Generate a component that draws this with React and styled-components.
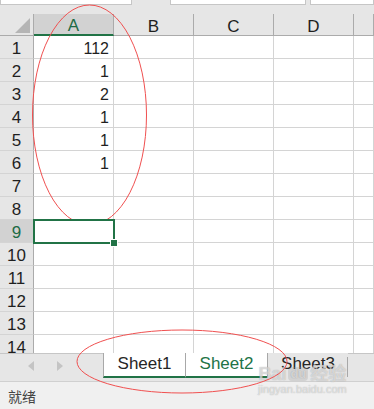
import React from "react";
import styled, { createGlobalStyle } from "styled-components";

const GlobalStyle = createGlobalStyle`
  html, body {
    margin: 0;
    padding: 0;
    background: #e6e6e6;
  }
  * {
    box-sizing: border-box;
  }
`;

const columns = ["A", "B", "C", "D", ""];
const values = ["112", "1", "2", "1", "1", "1"];
const rowCount = 14;
const selectedRow = 9;

const App = () => {
  return (
    <Window>
      <GlobalStyle />
      <TopStrip>
        <FormulaBox $width={132} />
        <FormulaGap $width={38} />
        <FormulaBox $width={136} />
        <FormulaGap $width={4} />
        <FormulaBox $width={64} />
      </TopStrip>

      <Sheet>
        <Corner>
          <CornerTriangle />
        </Corner>
        {columns.map((c, i) => (
          <ColHeader key={c + i} $selected={i === 0}>
            {c}
          </ColHeader>
        ))}

        {Array.from({ length: rowCount }).map((_, r) => {
          const row = r + 1;
          return (
            <React.Fragment key={row}>
              <RowHeader $selected={row === selectedRow}>{row}</RowHeader>
              {columns.map((c, i) => (
                <Cell key={c + i} $selected={row === selectedRow && i === 0}>
                  {i === 0 && values[r]}
                  {row === selectedRow && i === 0 && <FillHandle />}
                </Cell>
              ))}
            </React.Fragment>
          );
        })}
      </Sheet>

      <TabBar>
        <NavArrows>
          <Arrow viewBox="0 0 6 10">
            <path d="M6 0 L0 5 L6 10 Z" />
          </Arrow>
          <Arrow viewBox="0 0 6 10">
            <path d="M0 0 L6 5 L0 10 Z" />
          </Arrow>
        </NavArrows>
        <Tabs>
          <Tab $active>Sheet1</Tab>
          <Tab $active $current>
            Sheet2
          </Tab>
          <Tab>Sheet3</Tab>
        </Tabs>
        <Watermark>
          <WmLogo>
            Bai<WmBadge>du</WmBadge>经验
          </WmLogo>
          <WmUrl>jingyan.baidu.com</WmUrl>
        </Watermark>
      </TabBar>

      <StatusBar>就绪</StatusBar>

      <Annotation viewBox="0 0 374 409">
        <ellipse cx="89.5" cy="115" rx="57" ry="110" />
        <ellipse cx="182" cy="361.5" rx="105" ry="31.5" />
      </Annotation>
    </Window>
  );
};

export default App;

const Window = styled.div`
  position: relative;
  width: 374px;
  height: 409px;
  overflow: hidden;
  background: #e6e6e6;
  display: flex;
  flex-direction: column;
  font-family: "Liberation Sans", Arial, sans-serif;
  color: #1f1f1f;
`;

const TopStrip = styled.div`
  height: 14px;
  flex: none;
  display: flex;
  align-items: flex-start;
`;

const FormulaBox = styled.div`
  width: ${(p) => p.$width}px;
  height: 5px;
  background: #ffffff;
  border: 1px solid #c6c6c6;
  border-top: none;
  flex: none;
`;

const FormulaGap = styled.div`
  width: ${(p) => p.$width}px;
  flex: none;
`;

const Sheet = styled.div`
  flex: none;
  height: 339px;
  overflow: hidden;
  display: grid;
  grid-template-columns: 34px 80px 80px 80px 80px 1fr;
  grid-template-rows: 22px;
  grid-auto-rows: 23px;
  background: #ffffff;
`;

const Corner = styled.div`
  position: relative;
  background: #e6e6e6;
  border-right: 1px solid #ababab;
  border-bottom: 1px solid #ababab;
`;

const CornerTriangle = styled.div`
  position: absolute;
  right: 3px;
  bottom: 2px;
  width: 0;
  height: 0;
  border-left: 15px solid transparent;
  border-bottom: 15px solid #b5b5b5;
`;

const ColHeader = styled.div`
  display: flex;
  align-items: center;
  justify-content: center;
  font-size: 17px;
  padding-top: 4px;
  background: ${(p) => (p.$selected ? "#d2d2d2" : "#e6e6e6")};
  color: ${(p) => (p.$selected ? "#1e6b45" : "#1f1f1f")};
  border-right: 1px solid #ababab;
  border-bottom: ${(p) => (p.$selected ? "2px solid #217346" : "1px solid #ababab")};
`;

const RowHeader = styled.div`
  display: flex;
  align-items: center;
  justify-content: center;
  font-size: 17px;
  padding-top: 3px;
  background: ${(p) => (p.$selected ? "#d2d2d2" : "#e6e6e6")};
  color: ${(p) => (p.$selected ? "#1e6b45" : "#1f1f1f")};
  border-right: 1px solid #ababab;
  border-bottom: 1px solid #d4d4d4;
`;

const Cell = styled.div`
  position: relative;
  display: flex;
  align-items: center;
  justify-content: flex-end;
  padding: 3px 4px 0 0;
  font-size: 16px;
  background: #ffffff;
  border-right: 1px solid #d4d4d4;
  border-bottom: 1px solid #d4d4d4;
  ${(p) =>
    p.$selected &&
    `
    outline: 2px solid #217346;
    outline-offset: -1px;
    z-index: 1;
  `}
`;

const FillHandle = styled.span`
  position: absolute;
  right: -4px;
  bottom: -4px;
  width: 6px;
  height: 6px;
  background: #217346;
  border: 1px solid #ffffff;
  box-sizing: content-box;
  margin: -1px;
`;

const TabBar = styled.div`
  position: relative;
  flex: none;
  height: 29px;
  display: flex;
  align-items: flex-start;
  background: #e6e6e6;
  border-top: 1px solid #c6c6c6;
  border-bottom: 1px solid #d0d0d0;
`;

const NavArrows = styled.div`
  width: 103px;
  height: 24px;
  display: flex;
  align-items: center;
  gap: 23px;
  padding-left: 28px;
  flex: none;
`;

const Arrow = styled.svg`
  width: 6px;
  height: 10px;
  fill: #c4c4c4;
`;

const Tabs = styled.div`
  display: flex;
  align-items: flex-start;
  height: 24px;
  margin-top: -1px;
`;

const Tab = styled.div`
  width: ${(p) => (p.$active ? "82px" : "81px")};
  height: 25px;
  display: flex;
  align-items: center;
  justify-content: center;
  font-size: 17px;
  padding-bottom: 1px;
  color: ${(p) => (p.$current ? "#217346" : "#262626")};
  background: ${(p) => (p.$active ? "#ffffff" : "#e6e6e6")};
  border-left: 1px solid #a8a8a8;
  border-bottom: ${(p) => (p.$active ? "2px solid #217346" : "none")};
  &:last-child {
    position: relative;
    padding-bottom: 3px;
  }
  &:last-child::after {
    content: "";
    position: absolute;
    right: 0;
    top: 4px;
    bottom: 1px;
    width: 1px;
    background: #a8a8a8;
  }
`;

const Watermark = styled.div`
  position: absolute;
  left: 258px;
  top: 11px;
  display: flex;
  flex-direction: column;
  align-items: center;
  pointer-events: none;
  color: rgba(255, 255, 255, 0.55);
  text-shadow: 0 0 1px rgba(110, 110, 110, 0.6);
  font-family: "Liberation Sans", "Noto Sans CJK SC", sans-serif;
`;

const WmLogo = styled.div`
  display: flex;
  align-items: center;
  gap: 2px;
  font-size: 18px;
  font-weight: bold;
  line-height: 18px;
`;

const WmBadge = styled.span`
  font-size: 13px;
  line-height: 14px;
  padding: 0 2px;
  border-radius: 4px;
  background: rgba(150, 150, 150, 0.25);
`;

const WmUrl = styled.div`
  font-size: 11px;
  line-height: 12px;
`;

const StatusBar = styled.div`
  flex: 1;
  display: flex;
  align-items: center;
  padding-left: 8px;
  background: #f0f0f0;
  color: #444444;
  font-size: 14px;
  font-family: "Noto Sans CJK SC", sans-serif;
`;

const Annotation = styled.svg`
  position: absolute;
  left: 0;
  top: 0;
  width: 374px;
  height: 409px;
  pointer-events: none;
  fill: none;
  stroke: #f05050;
  stroke-width: 1;
`;
